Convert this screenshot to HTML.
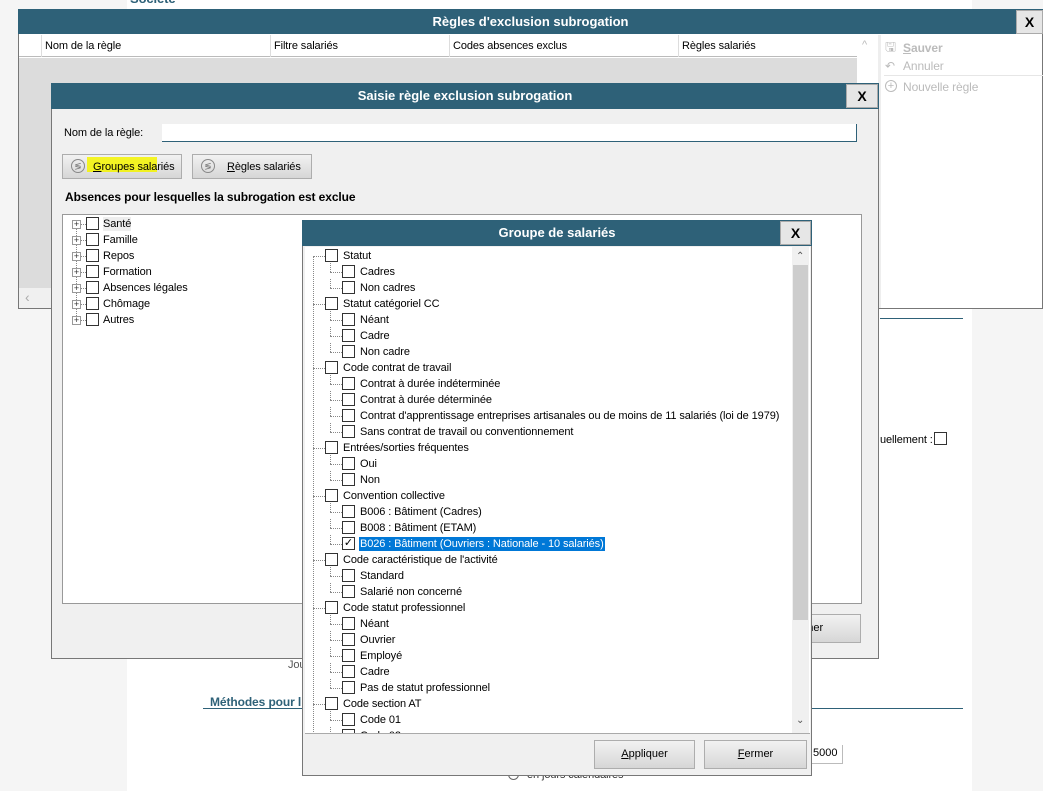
<!DOCTYPE html>
<html><head><meta charset="utf-8"><style>
*{box-sizing:border-box;margin:0;padding:0}
body{width:1043px;height:791px;position:relative;overflow:hidden;background:#fff;font-family:"Liberation Sans",sans-serif;font-size:11px;color:#000}
.a{position:absolute}
.tb{background:#2e6178;color:#fff;font-weight:bold;font-size:13px;text-align:center;line-height:25px}
.xb{position:absolute;background:#e6e6e6;border:1px solid #aaa;color:#000;font-weight:bold;font-size:14px;text-align:center;line-height:22px}
.btn{position:absolute;background:linear-gradient(#f2f2f2,#d6d6d6);border:1px solid #adadad;font-size:11px;text-align:center}
.cb{position:absolute;width:13px;height:13px;border:1px solid #333;background:#fff}
.t{position:absolute;font-size:11px;white-space:nowrap;line-height:14px;letter-spacing:-0.1px}
.dh{position:absolute;border-top:1px dotted #888;width:10px}
.dv{position:absolute;border-left:1px dotted #888}
</style></head><body>
<div class="a" style="left:0;top:0;width:127px;height:791px;background:#f5f5f5"></div>
<div class="a" style="left:972px;top:0;width:71px;height:791px;background:#f5f5f5"></div>
<div class="t" style="left:130px;top:-8px;color:#2e6178;font-weight:bold;font-size:13px">Société</div>
<div class="a" style="left:880px;top:318px;width:83px;border-top:1px solid #2e6178"></div>
<div class="a" style="left:203px;top:708px;width:760px;border-top:1px solid #2e6178"></div>
<div class="t" style="left:210px;top:695px;color:#2e6178;font-weight:bold;font-size:12px">Méthodes pour l</div>
<div class="t" style="left:288px;top:658px;color:#555">Jou</div>
<div class="t" style="left:880px;top:433px">uellement :</div>
<div class="cb" style="left:934px;top:432px"></div>
<div class="a" style="left:812px;top:745px;width:31px;height:19px;border:1px solid #bbb;border-top:none;border-left:none;font-size:11px;padding-left:1px;line-height:17px">5000</div>
<div class="a" style="left:508px;top:769px;width:11px;height:11px;border:1px solid #666;border-radius:50%"></div>
<div class="t" style="left:527px;top:768px;color:#333">en jours calendaires</div>

<div class="a" style="left:18px;top:9px;width:1025px;height:300px;border:1px solid #777;background:#fff"></div>
<div class="a tb" style="left:18px;top:9px;width:1025px;height:25px">Règles d'exclusion subrogation</div>
<div class="xb" style="left:1016px;top:10px;width:27px;height:24px">X</div>
<div class="a" style="left:19px;top:35px;width:838px;height:22px;background:#fff;border-bottom:1px solid #bbb"></div>
<div class="a" style="left:41px;top:35px;height:22px;border-left:1px solid #ddd"></div>
<div class="a" style="left:270px;top:35px;height:22px;border-left:1px solid #ddd"></div>
<div class="a" style="left:449px;top:35px;height:22px;border-left:1px solid #ddd"></div>
<div class="a" style="left:678px;top:35px;height:22px;border-left:1px solid #ddd"></div>
<div class="t" style="left:45px;top:39px">Nom de la règle</div>
<div class="t" style="left:274px;top:39px">Filtre salariés</div>
<div class="t" style="left:453px;top:39px">Codes absences exclus</div>
<div class="t" style="left:682px;top:39px">Règles salariés</div>
<div class="a" style="left:19px;top:58px;width:838px;height:230px;background:#dcdcdc"></div>
<div class="a" style="left:19px;top:288px;width:838px;height:20px;background:#f0f0f0;color:#aaa;font-size:14px;padding-left:6px;line-height:18px">‹</div>
<div class="t" style="left:862px;top:38px;color:#bbb">^</div>
<div class="a" style="left:878px;top:35px;width:3px;height:273px;background:#eee"></div>
<div class="t" style="left:885px;top:40px;color:#bbb;font-size:13px">🖫</div>
<div class="t" style="left:903px;top:41px;color:#bbb;font-weight:bold;font-size:12px;text-decoration:underline">S</div><div class="t" style="left:911px;top:41px;color:#bbb;font-weight:bold;font-size:12px">auver</div>
<div class="t" style="left:885px;top:59px;color:#bbb;font-size:12px">↶</div>
<div class="t" style="left:903px;top:59px;color:#bbb;font-size:12px">Annuler</div>
<div class="a" style="left:884px;top:75px;width:159px;border-top:1px solid #e6e6e6"></div>
<div class="a" style="left:885px;top:80px;width:12px;height:12px;border:1px solid #bbb;border-radius:50%;color:#bbb;font-size:11px;line-height:10px;text-align:center">+</div>
<div class="t" style="left:903px;top:80px;color:#bbb;font-size:12px">Nouvelle règle</div>

<div class="a" style="left:51px;top:83px;width:828px;height:576px;border:1px solid #777;background:#f0f0f0"></div>
<div class="a tb" style="left:51px;top:83px;width:828px;height:26px">Saisie règle exclusion subrogation</div>
<div class="xb" style="left:846px;top:84px;width:32px;height:24px">X</div>
<div class="t" style="left:64px;top:126px">Nom de la règle:</div>
<div class="a" style="left:162px;top:124px;width:695px;height:18px;background:#fff;border-bottom:1px solid #2e6178;border-right:1px solid #2e6178"></div>
<div class="btn" style="left:62px;top:154px;width:120px;height:25px"></div>
<div class="a" style="left:87px;top:157px;width:70px;height:15px;background:#f4f400;opacity:.85"></div>
<div class="a" style="left:71px;top:159px;width:14px;height:14px;border:1px solid #888;border-radius:50%;font-size:9px;line-height:12px;text-align:center;color:#777">≶</div>
<div class="t" style="left:93px;top:160px"><u>G</u>roupes salariés</div>
<div class="btn" style="left:192px;top:154px;width:120px;height:25px"></div>
<div class="a" style="left:201px;top:159px;width:14px;height:14px;border:1px solid #888;border-radius:50%;font-size:9px;line-height:12px;text-align:center;color:#777">≶</div>
<div class="t" style="left:227px;top:160px"><u>R</u>ègles salariés</div>
<div class="t" style="left:65px;top:190px;font-weight:bold;font-size:12px">Absences pour lesquelles la subrogation est exclue</div>
<div class="a" style="left:62px;top:214px;width:800px;height:390px;background:#fff;border:1px solid #999"></div>
<div class="dv" style="left:76px;top:224px;height:96px"></div>
<div id="l2"></div>
<div class="btn" style="left:750px;top:614px;width:111px;height:29px;line-height:27px">Fermer</div>

<div class="a" style="left:302px;top:220px;width:510px;height:556px;border:1px solid #777;background:#f0f0f0"></div>
<div class="a tb" style="left:302px;top:220px;width:510px;height:26px">Groupe de salariés</div>
<div class="xb" style="left:780px;top:221px;width:31px;height:24px">X</div>
<div class="a" style="left:305px;top:247px;width:505px;height:487px;background:#fff"></div>
<div class="a" style="left:792px;top:247px;width:17px;height:487px;background:#f0f0f0"></div>
<div class="a" style="left:793px;top:265px;width:15px;height:355px;background:#cdcdcd"></div>
<div class="t" style="left:796px;top:250px;color:#555;font-size:10px">⌃</div>
<div class="t" style="left:796px;top:714px;color:#555;font-size:10px">⌄</div>
<div class="a" style="left:305px;top:733px;width:505px;border-top:1px solid #aaa"></div>
<div class="btn" style="left:594px;top:740px;width:101px;height:29px;line-height:27px"><u>A</u>ppliquer</div>
<div class="btn" style="left:704px;top:740px;width:103px;height:29px;line-height:27px"><u>F</u>ermer</div>
<div class="a" style="left:305px;top:247px;width:487px;height:486px;overflow:hidden" id="tr"></div>
<script>
var L=document.getElementById('l2'),h='';
['Santé','Famille','Repos','Formation','Absences légales','Chômage','Autres'].forEach(function(s,i){var y=224+i*16;
h+='<div class="a" style="left:72px;top:'+(y-4)+'px;width:9px;height:9px;border:1px solid #999;background:#fff;font-size:9px;line-height:7px;text-align:center;color:#333">+</div>';
h+='<div class="dh" style="left:81px;top:'+y+'px;width:5px"></div><div class="cb" style="left:86px;top:'+(y-7)+'px"></div><div class="t" style="left:103px;top:'+(y-7)+'px'+(i==0?';background:#eee':'')+'">'+s+'</div>';});
L.innerHTML=h;
var items=[[1,'Statut'],[2,'Cadres'],[2,'Non cadres'],[1,'Statut catégoriel CC'],[2,'Néant'],[2,'Cadre'],[2,'Non cadre'],[1,'Code contrat de travail'],[2,'Contrat à durée indéterminée'],[2,'Contrat à durée déterminée'],[2,"Contrat d'apprentissage entreprises artisanales ou de moins de 11 salariés (loi de 1979)"],[2,'Sans contrat de travail ou conventionnement'],[1,'Entrées/sorties fréquentes'],[2,'Oui'],[2,'Non'],[1,'Convention collective'],[2,'B006 : Bâtiment (Cadres)'],[2,'B008 : Bâtiment (ETAM)'],[2,'B026 : Bâtiment (Ouvriers : Nationale - 10 salariés)',1],[1,"Code caractéristique de l'activité"],[2,'Standard'],[2,'Salarié non concerné'],[1,'Code statut professionnel'],[2,'Néant'],[2,'Ouvrier'],[2,'Employé'],[2,'Cadre'],[2,'Pas de statut professionnel'],[1,'Code section AT'],[2,'Code 01'],[2,'Code 02']];
var T=document.getElementById('tr');h='<div class="dv" style="left:8px;top:9px;height:490px"></div>';
var ox=305,oy=247;
items.forEach(function(it,i){var y=256+i*16-oy;
if(it[0]==1){h+='<div class="dh" style="left:8px;top:'+y+'px;width:12px"></div><div class="cb" style="left:'+(325-ox)+'px;top:'+(y-7)+'px"></div><div class="t" style="left:'+(343-ox)+'px;top:'+(y-7)+'px">'+it[1]+'</div>';}
else{h+='<div class="dv" style="left:25px;top:'+(y-9)+'px;height:9px"></div><div class="dh" style="left:25px;top:'+y+'px;width:12px"></div><div class="cb" style="left:'+(342-ox)+'px;top:'+(y-7)+'px;text-align:center;font-size:11px;line-height:11px">'+(it[2]?'✓':'')+'</div><div class="t" style="left:'+(359-ox)+'px;top:'+(y-7)+'px;padding:0 1px'+(it[2]?';background:#0078d7;color:#fff':'')+'">'+it[1]+'</div>';}});
T.innerHTML=h;
</script>
</body></html>
